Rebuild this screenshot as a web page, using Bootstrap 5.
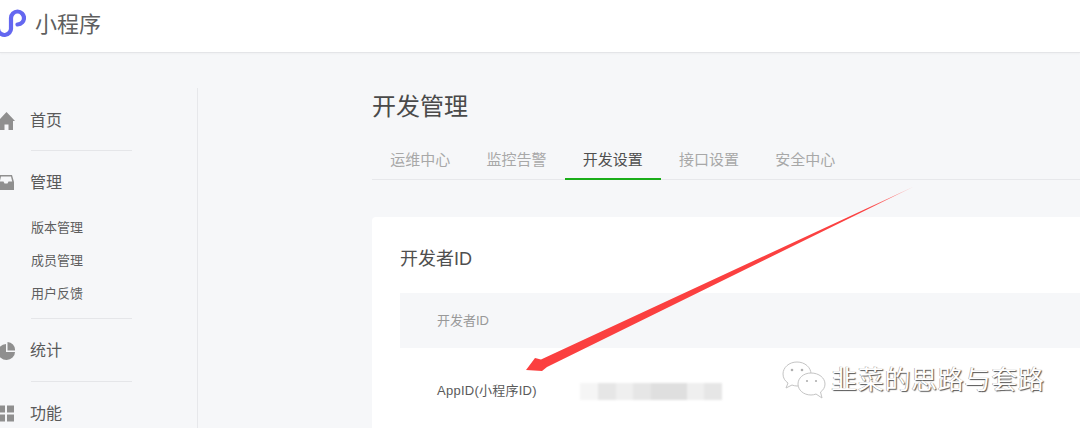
<!DOCTYPE html>
<html lang="zh-CN">
<head>
<meta charset="utf-8">
<title>开发管理</title>
<link href="https://cdn.jsdelivr.net/npm/bootstrap@5.3.0/dist/css/bootstrap.min.css" rel="stylesheet">
<style>
html,body{height:428px;overflow:hidden}
body{background:#f6f7f9;color:#4f4f4f;font-family:"Liberation Sans","Noto Sans CJK SC",sans-serif;position:relative}
.top-bar{height:53px;padding:0;background:#fff;border-bottom:1px solid #e4e5e8;box-shadow:0 1px 2px rgba(0,0,0,.03);justify-content:flex-start;flex-wrap:nowrap}
.brand-logo{margin-left:-4px;margin-right:9px;flex:none}
.top-bar .navbar-brand{font-size:22px;color:#5f5f5f;padding:0 0 2px;margin:0;line-height:1}
.page-body{height:375px;overflow:hidden}
.side-rail{width:198px;flex:none;margin-top:35px;border-right:1px solid #e7e8eb}
.side-head{height:62px;padding-top:1px;gap:15px;font-size:16px;color:#5a5a5a}
.side-head.first-head{padding-top:4px}
.side-head svg{margin-left:-2px;flex:none}
.side-sep{width:101px;margin:0 0 0 31px;border-top:1px solid #e5e6e9;opacity:1}
.side-subs{margin-top:-2px;padding-bottom:8px}
.side-subs a{display:flex;align-items:center;height:33px;padding:0 0 0 31px;font-size:13px;color:#5f5f5f}
.main-col{margin-left:174px;flex:1;min-width:0}
.page-title{font-size:24px;line-height:32px;font-weight:400;margin:38px 0 0;color:#4a4a4a}
.tab-row{margin-top:18px;border-bottom:1px solid #e7e8eb;height:39px;flex-wrap:nowrap}
.tab-row .nav-link{width:96.3px;padding:0;text-align:center;height:39px;line-height:37px;font-size:15px;color:#a8a8a8;white-space:nowrap}
.tab-row .nav-link.active{color:#4f4f4f;border-bottom:2px solid #1aad19}
.dev-card{margin-top:37px;width:900px;height:300px;border:0;border-radius:4px;padding:28px 0 0 28px;background:#fff}
.dev-card h2{font-size:18px;line-height:28px;font-weight:400;margin:0 0 20px;color:#4f4f4f}
.dev-table{margin:0;font-size:13px}
.dev-table th{background:#f6f7f9;height:55px;font-weight:400;color:#999;padding:0 0 0 37px;border:0;vertical-align:middle}
.dev-table td{height:86px;padding:0 0 0 37px;border:0;vertical-align:middle;color:#5a5a5a;white-space:nowrap}
.dev-table td.id-col{letter-spacing:.25px}
.dev-table .id-col{width:180px}
.blur-val{width:142px;height:17px;filter:blur(1.2px)}
.blur-val span{flex:1;background:#e6e6e6}
.blur-val span:nth-child(odd){background:#efefef}
.blur-val span:nth-child(1){background:#f5f5f5}
.blur-val span:nth-child(5),.blur-val span:nth-child(6){background:#dfdfdf}
.arrow-layer{position:absolute;left:0;top:0;pointer-events:none}
.wm-mark{position:absolute;left:782px;top:360px;gap:5px}
.wm-text{font-size:26px;letter-spacing:.7px;line-height:40px;color:#fff;text-shadow:1px 1px 1px #555,-.5px -.5px .5px #999;white-space:nowrap}
</style>
</head>
<body>
<nav class="navbar top-bar">
  <svg class="brand-logo" width="30" height="40" viewBox="-4 0 30 40"><path d="M17.500 18.500C21.500 18 24 15.200 24 12A6.500 6.500 0 0 0 11 12V22A6.500 6.500 0 0 1 -2 23" fill="none" stroke="#6467f0" stroke-width="4.200" stroke-linecap="round"/></svg>
  <a class="navbar-brand" href="#">小程序</a>
</nav>
<div class="d-flex page-body">
  <aside class="side-rail">
    <a class="side-head first-head d-flex align-items-center text-decoration-none" href="#">
      <svg width="17" height="18" viewBox="0 0 17 18"><path d="M8.500 0 17 9H15V18H10.500V12.500H6.500V18H2V9H0Z" fill="#8f8f8f"/></svg>首页</a>
    <hr class="side-sep">
    <a class="side-head d-flex align-items-center text-decoration-none" href="#">
      <svg width="17" height="17" viewBox="0 0 17 17"><path fill-rule="evenodd" d="M2 1H14L16 8V16H0V8ZM3 2.500 1.800 7.500H5.500L6.500 9.500H9.500L10.500 7.500H14.200L13 2.500Z" fill="#8f8f8f"/></svg>管理</a>
    <div class="side-subs">
      <a class="text-decoration-none" href="#">版本管理</a>
      <a class="text-decoration-none" href="#">成员管理</a>
      <a class="text-decoration-none" href="#">用户反馈</a>
    </div>
    <hr class="side-sep">
    <a class="side-head d-flex align-items-center text-decoration-none" href="#">
      <svg width="17" height="18" viewBox="0 0 17 18"><path d="M8 2V10H17A8.500 8 0 1 1 8 2ZM9.500 0A7.500 8 0 0 1 17 8.500H9.500Z" fill="#8f8f8f"/></svg>统计</a>
    <hr class="side-sep">
    <a class="side-head d-flex align-items-center text-decoration-none" href="#">
      <svg width="17" height="17" viewBox="0 0 17 17"><path d="M0 0.500H7V7.500H0ZM9 0.500H16V7.500H9ZM0 9.500H7V16.500H0ZM9 9.500H16V16.500H9Z" fill="#8f8f8f"/></svg>功能</a>
  </aside>
  <main class="main-col">
    <h1 class="page-title">开发管理</h1>
    <ul class="nav tab-row">
      <li class="nav-item"><a class="nav-link" href="#">运维中心</a></li>
      <li class="nav-item"><a class="nav-link" href="#">监控告警</a></li>
      <li class="nav-item"><a class="nav-link active" href="#">开发设置</a></li>
      <li class="nav-item"><a class="nav-link" href="#">接口设置</a></li>
      <li class="nav-item"><a class="nav-link" href="#">安全中心</a></li>
    </ul>
    <section class="card dev-card">
      <h2>开发者ID</h2>
      <table class="table dev-table">
        <thead><tr><th class="id-col">开发者ID</th><th></th></tr></thead>
        <tbody><tr><td class="id-col">AppID(小程序ID)</td><td class="p-0"><div class="blur-val d-flex"><span></span><span></span><span></span><span></span><span></span><span></span><span></span><span></span></div></td></tr></tbody>
      </table>
    </section>
  </main>
</div>
<svg class="arrow-layer" width="1080" height="428" viewBox="0 0 1080 428">
  <defs><linearGradient id="arrowFade" gradientUnits="userSpaceOnUse" x1="913" y1="187" x2="526" y2="370"><stop offset="0" stop-color="#ff5a5a" stop-opacity=".55"/><stop offset=".12" stop-color="#fb4141"/><stop offset="1" stop-color="#fb3f3f"/></linearGradient></defs>
  <polygon points="526,370 535,358 541,359.500 914,186.500 547,367 542,371" fill="url(#arrowFade)"/>
</svg>
<div class="wm-mark d-flex align-items-center">
  <svg width="44" height="38" viewBox="0 0 44 38"><g fill="#fff" stroke="#c4c4c4" stroke-width="1"><path d="M15 1C7 1 1 6.500 1 13C1 17 3 20 6 22L4 27L10 24C11.500 24.500 13 25 15 25C23 25 29 19.500 29 13C29 6.500 23 1 15 1Z"/><path d="M29 12C21.500 12 16 17 16 23C16 29 21.500 34 29 34C31 34 32.500 33.600 34 33L40 37L38.500 31C41.500 29 43 26 43 23C43 17 37 12 29 12Z"/></g><g fill="#b0b0b0"><circle cx="10" cy="9" r="1.300"/><circle cx="20" cy="9" r="1.300"/><circle cx="25" cy="20" r="1.100"/><circle cx="34" cy="20" r="1.100"/></g></svg>
  <span class="wm-text">韭菜的思路与套路</span>
</div>
</body>
</html>
